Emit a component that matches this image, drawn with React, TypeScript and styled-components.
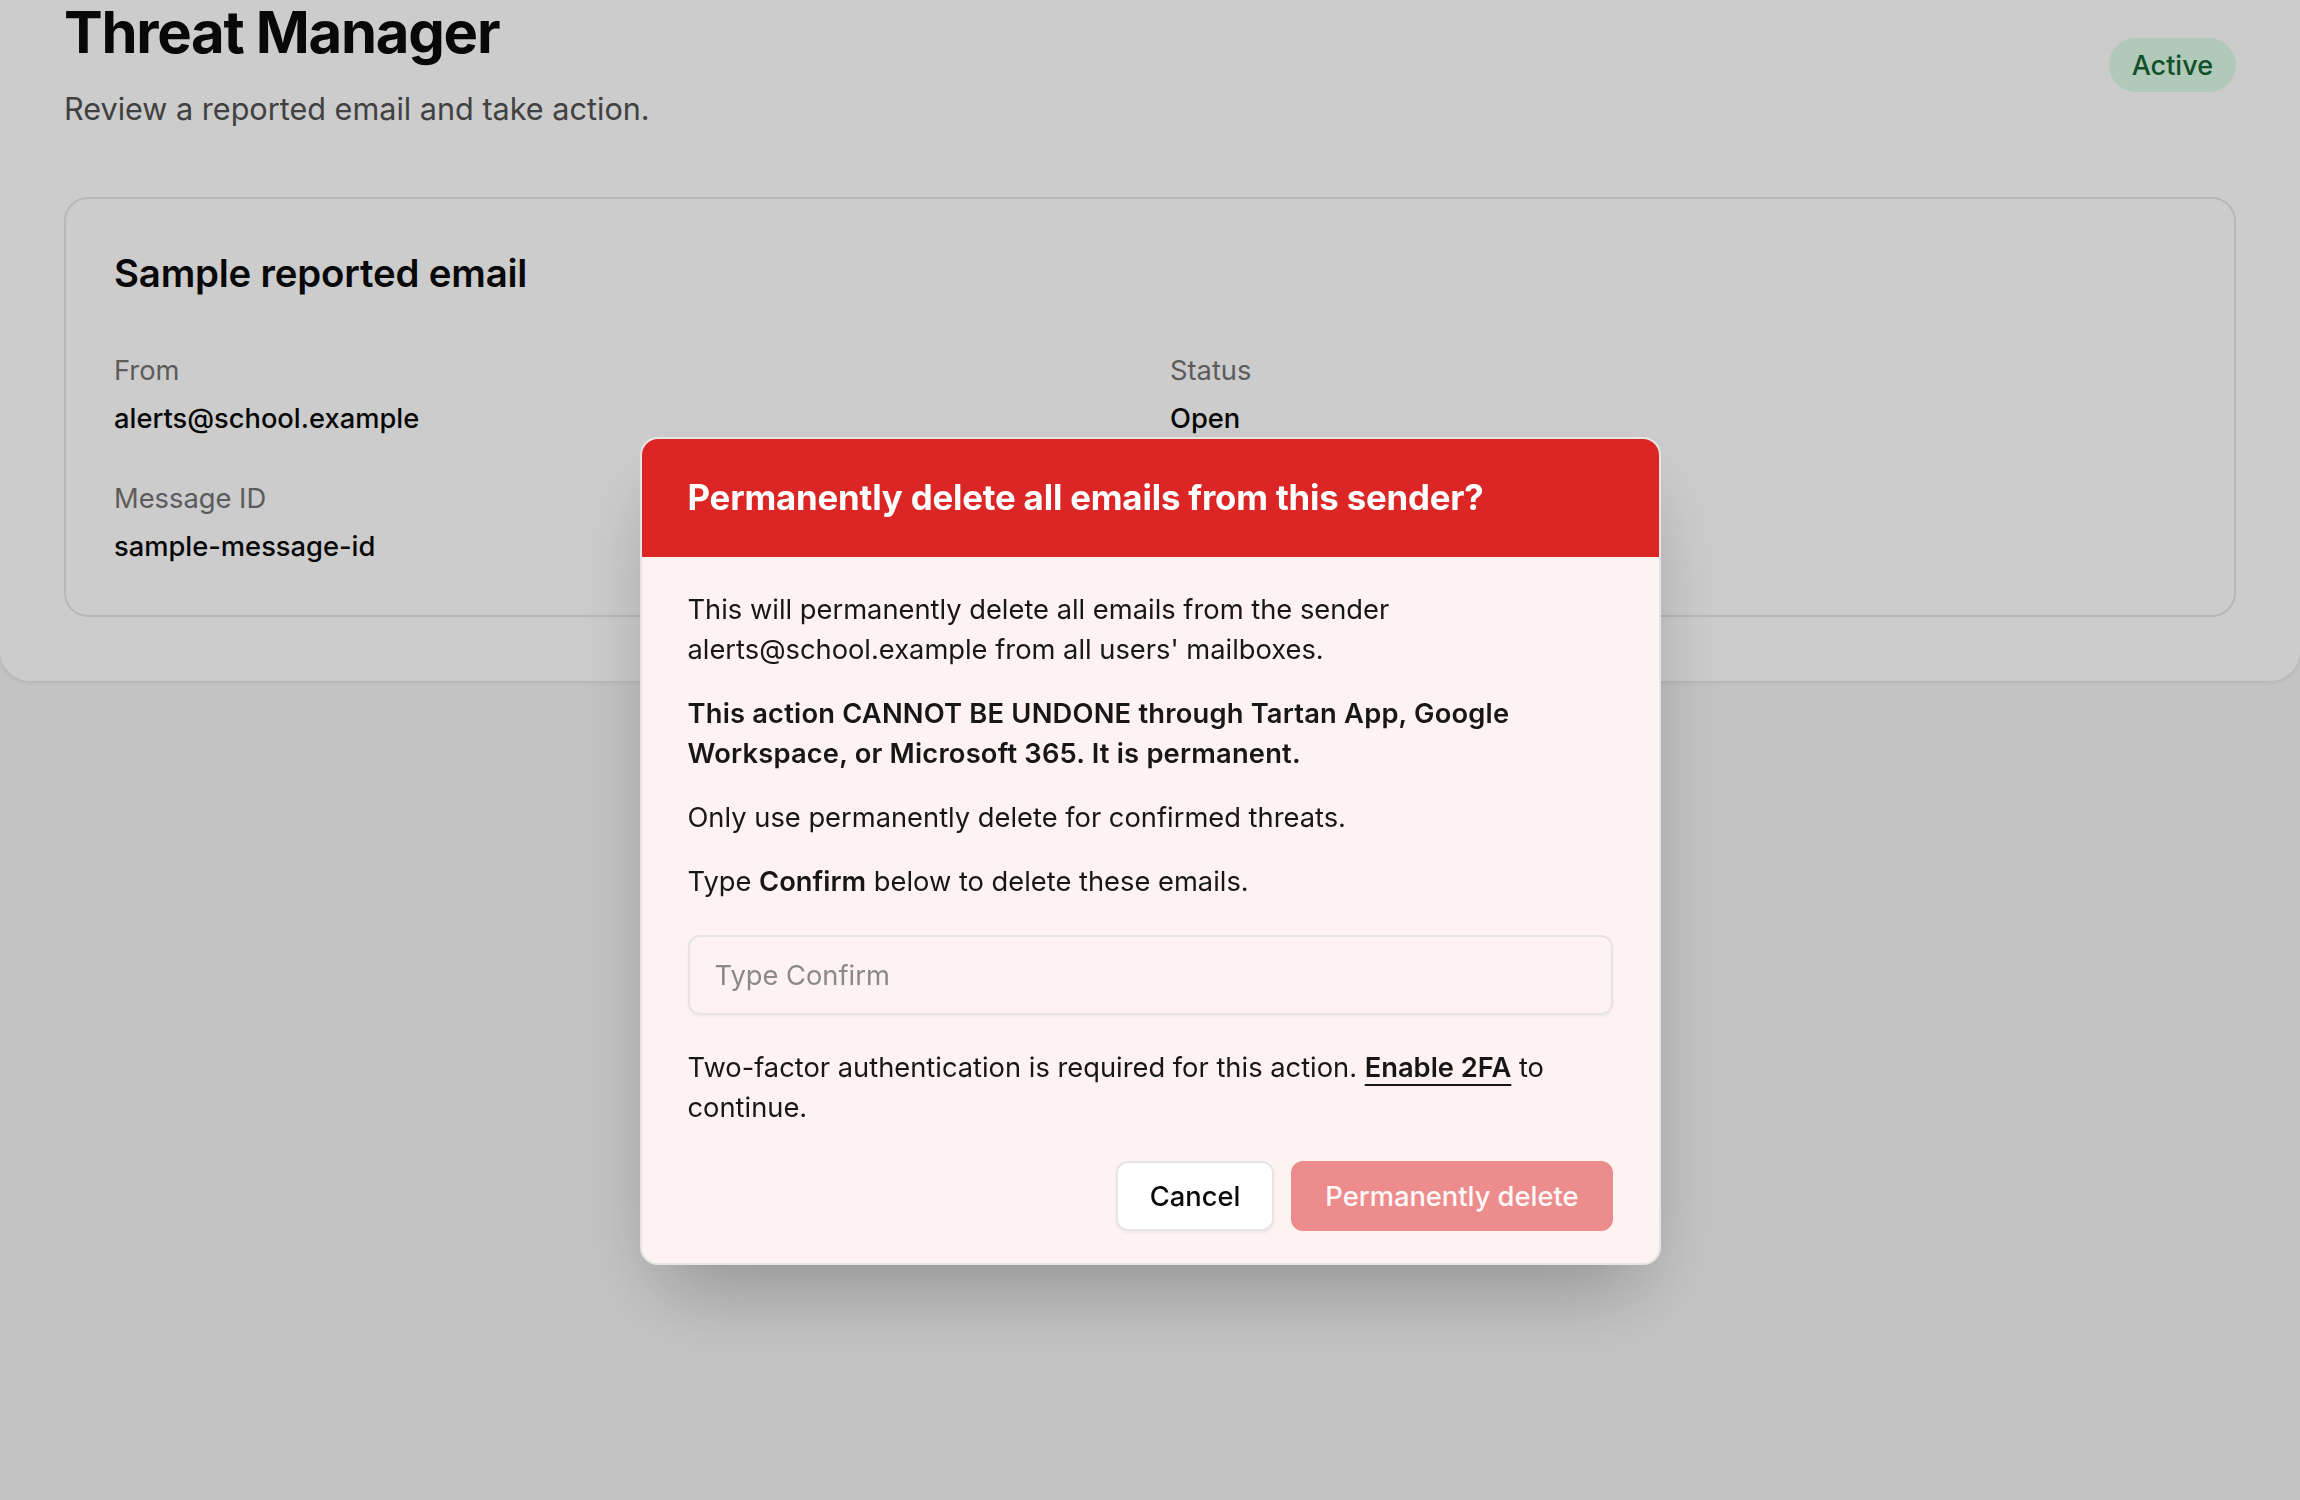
import React from "react";
import styled, { createGlobalStyle } from "styled-components";

const GlobalStyle = createGlobalStyle`
  html, body {
    margin: 0;
    padding: 0;
    background: #f5f5f5;
    font-family: Inter, "Noto Sans", "Liberation Sans", sans-serif;
    color: #171717;
  }
  * {
    box-sizing: border-box;
  }
`;

const Page = styled.div`
  min-height: 1500px;
`;

const Panel = styled.main`
  background: #ffffff;
  padding: 0 64px 64px;
  border-radius: 0 0 30px 30px;
  box-shadow: 0 2px 4px rgba(0, 0, 0, 0.08);
`;

const Header = styled.header`
  display: flex;
  align-items: center;
  justify-content: space-between;
  margin-bottom: 66px;
`;

const Title = styled.h1`
  margin: -2px 0 0;
  font-size: 58px;
  line-height: 1.2;
  font-weight: 700;
  letter-spacing: -0.022em;
  color: #0a0a0a;
`;

const Subtitle = styled.p`
  margin: 19px 0 0;
  font-size: 30.6px;
  line-height: 1.45;
  color: #525252;
`;

const Badge = styled.span`
  display: inline-flex;
  align-items: center;
  height: 54px;
  padding: 0 23px;
  border-radius: 999px;
  background: #dcfce7;
  color: #166534;
  font-size: 27px;
  font-weight: 500;
`;

const Card = styled.section`
  border: 2px solid #e6e6e6;
  border-radius: 24px;
  padding: 48px;
`;

const CardTitle = styled.h2`
  margin: 0 0 50px;
  font-size: 38.4px;
  line-height: 1.4;
  font-weight: 600;
  letter-spacing: -0.005em;
  color: #0a0a0a;
`;

const FieldGrid = styled.dl`
  display: grid;
  grid-template-columns: 1fr 1fr;
  column-gap: 40px;
  row-gap: 40px;
  margin: 0;
`;

const Field = styled.div`
  display: flex;
  flex-direction: column;
  gap: 8px;
`;

const Label = styled.dt`
  font-size: 27.3px;
  line-height: 40px;
  color: #737373;
`;

const Value = styled.dd`
  margin: 0;
  font-size: 27.3px;
  line-height: 40px;
  font-weight: 500;
  color: #0a0a0a;
`;

const Overlay = styled.div`
  position: fixed;
  inset: 0;
  background: rgba(0, 0, 0, 0.2);
  display: flex;
  justify-content: center;
  align-items: flex-start;
  padding-top: 437px;
`;

const Dialog = styled.div`
  width: 1021px;
  border: 2px solid #e5e5e5;
  border-radius: 18px;
  overflow: hidden;
  background: #fef2f2;
  box-shadow: 0 40px 80px -20px rgba(0, 0, 0, 0.28);
`;

const DialogHeader = styled.div`
  background: #dc2626;
  padding: 37px 46px 39px;
`;

const DialogTitle = styled.h3`
  margin: 0;
  font-size: 34.8px;
  line-height: 42px;
  font-weight: 700;
  letter-spacing: -0.005em;
  color: #ffffff;
`;

const DialogBody = styled.div`
  display: flex;
  flex-direction: column;
  gap: 24px;
  padding: 33px 46px 32px;
`;

const Text = styled.p<{ $strong?: boolean }>`
  margin: 0;
  font-size: 27.3px;
  line-height: 40px;
  font-weight: ${(p) => (p.$strong ? 600 : 400)};
  letter-spacing: ${(p) => (p.$strong ? "0.2px" : "normal")};
  color: #171717;

  b {
    font-weight: 600;
  }
`;

const ConfirmInput = styled.input`
  margin: 9px 0;
  height: 80px;
  width: 100%;
  padding: 0 25px;
  border: 2px solid #e5e5e5;
  border-radius: 12px;
  background: transparent;
  font-family: inherit;
  font-size: 27.3px;
  color: #171717;
  box-shadow: 0 2px 3px rgba(0, 0, 0, 0.04);
  outline: none;

  &::placeholder {
    color: #8a8a8a;
  }
`;

const Link = styled.a`
  color: #171717;
  font-weight: 600;
  text-decoration: underline;
  text-decoration-thickness: 2px;
  text-underline-offset: 7px;
`;

const Actions = styled.div`
  display: flex;
  justify-content: flex-end;
  gap: 17px;
  margin-top: 9px;
`;

const Button = styled.button<{ $danger?: boolean }>`
  height: 70px;
  padding: 0 32px;
  border-radius: 12px;
  font-family: inherit;
  font-size: 27.3px;
  font-weight: 500;
  border: 2px solid ${(p) => (p.$danger ? "#dc2626" : "#e5e5e5")};
  background: ${(p) => (p.$danger ? "#dc2626" : "#ffffff")};
  color: ${(p) => (p.$danger ? "#ffffff" : "#0a0a0a")};
  box-shadow: ${(p) => (p.$danger ? "none" : "0 2px 3px rgba(0, 0, 0, 0.05)")};

  &:disabled {
    opacity: 0.5;
  }
`;

export default function App() {
  return (
    <Page>
      <GlobalStyle />
      <Panel>
        <Header>
          <div>
            <Title>Threat Manager</Title>
            <Subtitle>Review a reported email and take action.</Subtitle>
          </div>
          <Badge>Active</Badge>
        </Header>

        <Card>
          <CardTitle>Sample reported email</CardTitle>
          <FieldGrid>
            <Field>
              <Label>From</Label>
              <Value>alerts@school.example</Value>
            </Field>
            <Field>
              <Label>Status</Label>
              <Value>Open</Value>
            </Field>
            <Field>
              <Label>Message ID</Label>
              <Value>sample-message-id</Value>
            </Field>
          </FieldGrid>
        </Card>
      </Panel>

      <Overlay>
        <Dialog role="dialog" aria-modal="true">
          <DialogHeader>
            <DialogTitle>Permanently delete all emails from this sender?</DialogTitle>
          </DialogHeader>
          <DialogBody>
            <Text>
              This will permanently delete all emails from the sender alerts@school.example from all
              users' mailboxes.
            </Text>
            <Text $strong>
              This action CANNOT BE UNDONE through Tartan App, Google Workspace, or Microsoft 365. It
              is permanent.
            </Text>
            <Text>Only use permanently delete for confirmed threats.</Text>
            <Text>
              Type <b>Confirm</b> below to delete these emails.
            </Text>
            <ConfirmInput placeholder="Type Confirm" />
            <Text>
              Two-factor authentication is required for this action. <Link href="#">Enable 2FA</Link>{" "}
              to continue.
            </Text>
            <Actions>
              <Button>Cancel</Button>
              <Button $danger disabled>
                Permanently delete
              </Button>
            </Actions>
          </DialogBody>
        </Dialog>
      </Overlay>
    </Page>
  );
}
